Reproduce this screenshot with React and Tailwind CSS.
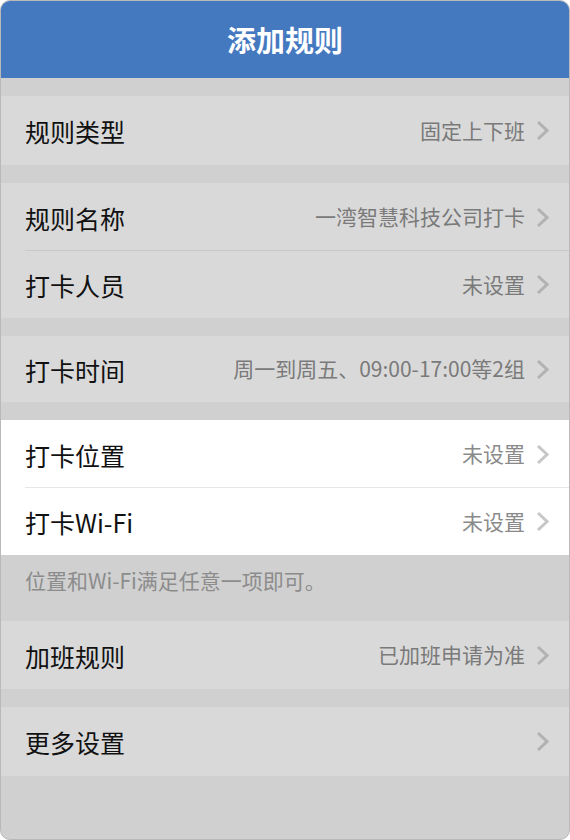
import React from "react";

function Chevron({ light }) {
  return (
    <svg width="13" height="21" viewBox="0 0 13 21" className="shrink-0">
      <polyline
        points="2,2 11,10.5 2,19"
        fill="none"
        stroke={light ? "#c7c7c7" : "#b2b2b2"}
        strokeWidth="3"
      />
    </svg>
  );
}

function Row({ label, value, light, h, divider }) {
  return (
    <div className={`relative flex items-center pl-[24px] pr-[20px] ${h} ${light ? "bg-white" : "bg-[#d9d9d9]"}`}>
      <span className="flex-1 text-[25px] text-[#111] pt-[3px]">{label}</span>
      {value && (
        <span className={`text-[21px] mr-[11px] ${light ? "text-[#8a8a8a]" : "text-[#7a7a7a]"}`}>{value}</span>
      )}
      <Chevron light={light} />
      {divider && (
        <div className={`absolute left-[24px] right-0 bottom-0 h-px ${light ? "bg-[#e6e6e6]" : "bg-[#c8c8c8]"}`} />
      )}
    </div>
  );
}

function Gap() {
  return <div className="h-[18px]" />;
}

export default function App() {
  return (
    <div className="w-[570px] h-[840px] bg-[#d0d0d0] rounded-[10px] border border-[#b9b9b9] overflow-hidden font-['Noto_Sans_CJK_SC',sans-serif] flex flex-col">
      {/* Header */}
      <div className="h-[77px] bg-[#4478bf] flex items-center justify-center shrink-0">
        <span className="text-white text-[29px] font-bold">添加规则</span>
      </div>
      <Gap />
      <Row label="规则类型" value="固定上下班" h="h-[69px]" />
      <Gap />
      <Row label="规则名称" value="一湾智慧科技公司打卡" h="h-[68px]" divider />
      <Row label="打卡人员" value="未设置" h="h-[67px]" />
      <Gap />
      <Row label="打卡时间" value="周一到周五、09:00-17:00等2组" h="h-[66px]" />
      <Gap />
      <Row label="打卡位置" value="未设置" h="h-[68px]" light divider />
      <Row label="打卡Wi-Fi" value="未设置" h="h-[67px]" light />
      <div className="h-[66px] pl-[24px] pt-[10px] text-[21px] text-[#8c8c8c]">位置和Wi-Fi满足任意一项即可。</div>
      <Row label="加班规则" value="已加班申请为准" h="h-[68px]" />
      <Gap />
      <Row label="更多设置" h="h-[69px]" />
      <div className="flex-1" />
    </div>
  );
}
